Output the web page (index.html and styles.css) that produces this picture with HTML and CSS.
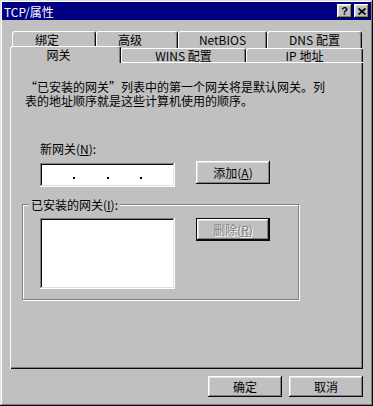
FILE: index.html
```html
<!DOCTYPE html>
<html lang="zh-CN">

<head>
  <meta charset="UTF-8" />
  <title>TCP/属性</title>
  <link rel="stylesheet" href="styles.css">
</head>

<body>

  <div class="window">
    <div class="title-bar">
      <span class="title-text">TCP/属性</span>
      <div class="title-buttons">
        <button class="title-btn help-btn">?</button>
        <button class="title-btn">
          <svg width="8" height="7" viewBox="0 0 8 7">
            <path d="M0.5 0.5 L7.5 6.5 M7.5 0.5 L0.5 6.5" stroke="#000" stroke-width="1.7" />
          </svg>
        </button>
      </div>
    </div>

    <div class="window-body">
      <div class="tab-row tab-row-back">
        <div class="tab tab-cn tab-binding">绑定</div>
        <div class="tab tab-cn tab-advanced">高级</div>
        <div class="tab tab-netbios">NetBIOS</div>
        <div class="tab tab-dns">DNS 配置</div>
      </div>
      <div class="tab-row tab-row-front">
        <div class="tab tab-cn tab-gateway selected">网关</div>
        <div class="tab tab-wins">WINS 配置</div>
        <div class="tab tab-ip">IP 地址</div>
      </div>

      <div class="tab-panel">
        <p class="note">“已安装的网关”列表中的第一个网关将是默认网关。列<br>表的地址顺序就是这些计算机使用的顺序。</p>

        <div class="new-gw">
          <div class="field-label">新网关(<u>N</u>):</div>
          <div class="gw-row">
            <div class="ip-field">
              <span class="seg"></span><span class="dot"></span>
              <span class="seg"></span><span class="dot"></span>
              <span class="seg"></span><span class="dot"></span>
              <span class="seg"></span>
            </div>
            <button class="btn add-btn">添加(<u>A</u>)</button>
          </div>
        </div>

        <fieldset class="group">
          <legend>已安装的网关(<u>I</u>):</legend>
          <div class="group-row">
            <div class="list-box"></div>
            <button class="btn remove-btn" disabled>删除(<u>R</u>)</button>
          </div>
        </fieldset>
      </div>

      <div class="dialog-buttons">
        <button class="btn">确定</button>
        <button class="btn">取消</button>
      </div>
    </div>
  </div>

</body>

</html>
```

FILE: styles.css
```css
:root {
  --face: #c0c0c0;
  --light: #dfdfdf;
  --shadow: #808080;
  --dark: #0a0a0a;
  --title-bg: #000080;
}

body {
  margin: 0;
  background-color: var(--face);
  font-family: "Noto Sans CJK SC", sans-serif;
  font-size: 12px;
  color: #000;
}

.window {
  width: 373px;
  height: 406px;
  box-sizing: border-box;
  padding: 2px;
  background-color: var(--face);
  box-shadow: inset -1px -1px var(--dark), inset 1px 1px var(--light),
    inset -2px -2px var(--shadow), inset 2px 2px #fff;
}

.title-bar {
  height: 18px;
  background-color: var(--title-bg);
  color: #fff;
  display: flex;
  align-items: center;
  justify-content: space-between;
  padding: 0 2px 0 2px;
}

.title-text {
  line-height: 13px;
}

.title-buttons {
  display: flex;
  gap: 2px;
}

.title-btn {
  width: 15px;
  height: 14px;
  padding: 0;
  border: none;
  background-color: var(--face);
  box-shadow: inset -1px -1px var(--dark), inset 1px 1px #fff,
    inset -2px -2px var(--shadow), inset 2px 2px var(--light);
  display: flex;
  align-items: center;
  justify-content: center;
}

.help-btn {
  font-family: "Liberation Sans", sans-serif;
  font-weight: bold;
  font-size: 11px;
  line-height: 11px;
}

.window-body {
  padding: 11px 8px 0;
}

/* tabs */
.tab-row {
  display: flex;
}

.tab-row-back {
  padding-left: 2px;
  height: 17px;
}

.tab-row-front {
  margin-top: -2px;
  height: 16px;
  align-items: flex-end;
  position: relative;
  z-index: 1;
}

.tab {
  box-sizing: border-box;
  height: 17px;
  padding-top: 1px;
  border: 1px solid #fff;
  border-bottom: none;
  border-right-color: var(--dark);
  border-radius: 3px 3px 0 0;
  box-shadow: inset -1px 0 var(--shadow);
  background-color: var(--face);
  text-align: center;
  line-height: 13px;
  white-space: nowrap;
}

.tab-row-front .tab {
  height: 14px;
  padding-top: 0;
}

.tab-row-front .tab.selected {
  height: 17px;
  padding-top: 1px;
  margin-bottom: -1px;
}

.tab-cn {
  padding-right: 14px;
}

.tab-binding { width: 84px; }
.tab-advanced { width: 82px; }
.tab-netbios { width: 89px; }
.tab-dns { width: 95px; }
.tab-gateway { width: 111px; }
.tab-wins { width: 125px; }
.tab-ip { width: 117px; }

.tab-panel {
  height: 307px;
  box-sizing: border-box;
  padding: 18px 0 0 15px;
  box-shadow: inset 1px 1px #fff, inset -1px -1px var(--dark),
    inset -2px -2px var(--shadow);
}

.note {
  margin: 0;
  line-height: 14px;
}

.new-gw {
  margin: 34px 0 0 15px;
}

.field-label {
  line-height: 13px;
}

.gw-row {
  display: flex;
  align-items: flex-start;
  margin-top: 8px;
}

.ip-field {
  width: 135px;
  height: 24px;
  box-sizing: border-box;
  background-color: #fff;
  box-shadow: inset -1px -1px #fff, inset 1px 1px var(--shadow),
    inset -2px -2px var(--light), inset 2px 2px var(--dark);
  display: flex;
  align-items: flex-start;
  padding: 0 1px;
}

.seg {
  flex: 1;
}

.dot {
  width: 2px;
  height: 2px;
  margin-top: 14px;
  background-color: #000;
}

/* buttons */
.btn {
  width: 74px;
  height: 21px;
  padding: 0;
  border: none;
  background-color: var(--face);
  font: inherit;
  line-height: 13px;
  color: #000;
  box-shadow: inset -1px -1px var(--dark), inset 1px 1px #fff,
    inset -2px -2px var(--shadow), inset 2px 2px var(--light);
}

.add-btn {
  height: 23px;
  margin: -2px 0 0 21px;
}

.remove-btn {
  height: 23px;
  margin-left: 21px;
  color: var(--shadow);
  text-shadow: 1px 1px 0 #fff;
  box-shadow: inset 0 0 0 1px var(--dark), inset -2px -2px var(--dark),
    inset 2px 2px #fff, inset -3px -3px var(--shadow), inset 3px 3px var(--light);
}

/* group box */
.group {
  width: 277px;
  box-sizing: border-box;
  margin: 11px 0 0 -3px;
  padding: 7px 0 10px 0;
  border: 1px solid var(--shadow);
  box-shadow: 1px 1px #fff, inset 1px 1px #fff;
}

.group legend {
  margin-left: 6px;
  padding: 0 2px;
  line-height: 13px;
  background-color: var(--face);
}

.group-row {
  display: flex;
  align-items: flex-start;
  padding-left: 17px;
}

.list-box {
  width: 135px;
  height: 71px;
  box-sizing: border-box;
  background-color: #fff;
  box-shadow: inset -1px -1px #fff, inset 1px 1px var(--shadow),
    inset -2px -2px var(--light), inset 2px 2px var(--dark);
}

.dialog-buttons {
  display: flex;
  justify-content: flex-end;
  gap: 7px;
  margin-top: 7px;
}
```
